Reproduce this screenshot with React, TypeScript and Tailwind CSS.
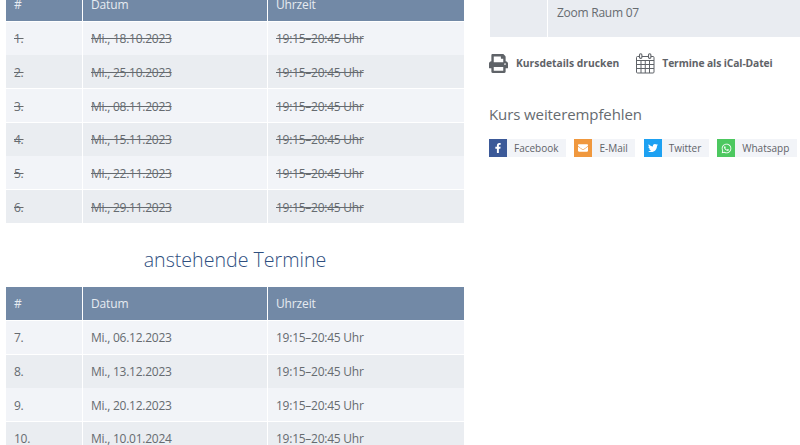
import { FaFacebookF, FaTwitter, FaWhatsapp, FaEnvelope, FaPrint } from "react-icons/fa";

const pastRows = [
  ["1.", "Mi., 18.10.2023"],
  ["2.", "Mi., 25.10.2023"],
  ["3.", "Mi., 08.11.2023"],
  ["4.", "Mi., 15.11.2023"],
  ["5.", "Mi., 22.11.2023"],
  ["6.", "Mi., 29.11.2023"],
];

const nextRows = [
  ["7.", "Mi., 06.12.2023"],
  ["8.", "Mi., 13.12.2023"],
  ["9.", "Mi., 20.12.2023"],
  ["10.", "Mi., 10.01.2024"],
];

function HeaderRow() {
  return (
    <div className="grid grid-cols-[76px_184px_196px] gap-x-px bg-white h-[33px] text-[12px] tracking-[-0.15px] text-[#e6ebf1]">
      <div className="bg-[#7289a6] pl-2 flex items-center">#</div>
      <div className="bg-[#7289a6] pl-2 flex items-center">Datum</div>
      <div className="bg-[#7289a6] pl-2 flex items-center">Uhrzeit</div>
    </div>
  );
}

function Rows({ rows, done }: { rows: string[][]; done: boolean }) {
  return (
    <>
      {rows.map((r, i) => {
        const shade = i % 2 === 0 ? "bg-[#f2f4f8]" : "bg-[#eaedf1]";
        const text = done ? "line-through" : "";
        return (
          <div key={r[0]} className={`grid grid-cols-[76px_184px_196px] gap-x-px mt-[0.7px] h-[33px] text-[12px] tracking-[-0.25px] text-[#666b70] ${text}`}>
            <div className={`${shade} pl-2 pt-[2px] flex items-center`}>{r[0]}</div>
            <div className={`${shade} pl-2 pt-[2px] flex items-center`}>{r[1]}</div>
            <div className={`${shade} pl-2 pt-[2px] flex items-center`}>19:15–20:45 Uhr</div>
          </div>
        );
      })}
    </>
  );
}

function CalendarIcon() {
  return (
    <svg width="19" height="21" viewBox="0 0 19 21" fill="none" stroke="#5f6368" strokeWidth="1" className="block">
      <rect x="0.5" y="3.5" width="17.5" height="16.5" rx="1" />
      <path d="M0.5 7.5h17.5M0.5 11.5h17.5M0.5 15.5h17.5M5 7.5v12.5M9.25 7.5v12.5M13.5 7.5v12.5" />
      <rect x="3.5" y="0.8" width="2.4" height="4.6" rx="1.2" fill="#fff" strokeWidth="1.1" />
      <rect x="12.5" y="0.8" width="2.4" height="4.6" rx="1.2" fill="#fff" strokeWidth="1.1" />
    </svg>
  );
}

function ShareButton({ label, color, icon }: { label: string; color: string; icon: React.ReactNode }) {
  return (
    <div className="flex items-center h-[18px] bg-[#f2f4f8] text-[10px] text-[#5f6368] whitespace-nowrap">
      <div className={`w-[18px] h-[18px] flex items-center justify-center text-white ${color}`}>{icon}</div>
      <span className="pl-[7px] pr-[7.6px]">{label}</span>
    </div>
  );
}

export default function App() {
  return (
    <div className="h-[445px] w-[800px] overflow-hidden bg-white" style={{ fontFamily: '"Open Sans", sans-serif' }}>
      <div className="flex items-start pl-[6px] -mt-[12px]">
        {/* Termine tables */}
        <div className="w-[458px] shrink-0">
          <HeaderRow />
          <Rows rows={pastRows} done />
          <h2 className="text-[19.6px] leading-[28px] text-center text-[#2f4f7f] font-light mt-[23px] mb-[13px]">
            anstehende Termine
          </h2>
          <HeaderRow />
          <Rows rows={nextRows} done={false} />
        </div>

        {/* Sidebar */}
        <div className="ml-[26px] w-[310px] shrink-0 -mt-[10px]">
          <div className="grid grid-cols-[57px_1fr] gap-x-px h-[59px]">
            <div className="bg-[#e9ecf1]" />
            <div className="bg-[#e9ecf1] pl-[9px] pt-[9px] text-[12px] tracking-[-0.25px] leading-[17px] text-[#666b70]">
              <div>Online-Kurs</div>
              <div>Zoom Raum 07</div>
            </div>
          </div>
          <div className="flex items-center -ml-px mt-[16px] text-[10.3px] font-bold text-[#5f6368] whitespace-nowrap">
            <FaPrint className="text-[#5f6368] text-[19px]" />
            <span className="ml-[8px]">Kursdetails drucken</span>
            <span className="ml-[17px]"><CalendarIcon /></span>
            <span className="ml-[7px] tracking-[-0.1px]">Termine als iCal-Datei</span>
          </div>
          <h3 className="-ml-px mt-[29px] text-[15px] tracking-[-0.1px] leading-[22px] text-[#666b70]">Kurs weiterempfehlen</h3>
          <div className="flex gap-[8.3px] -ml-px mt-[14px]">
            <ShareButton label="Facebook" color="bg-[#3b5998]" icon={<FaFacebookF size={10} />} />
            <ShareButton label="E-Mail" color="bg-[#f0983e]" icon={<FaEnvelope size={10} />} />
            <ShareButton label="Twitter" color="bg-[#1da1f2]" icon={<FaTwitter size={10} />} />
            <ShareButton label="Whatsapp" color="bg-[#4dc860]" icon={<FaWhatsapp size={11} />} />
          </div>
        </div>
      </div>
    </div>
  );
}
